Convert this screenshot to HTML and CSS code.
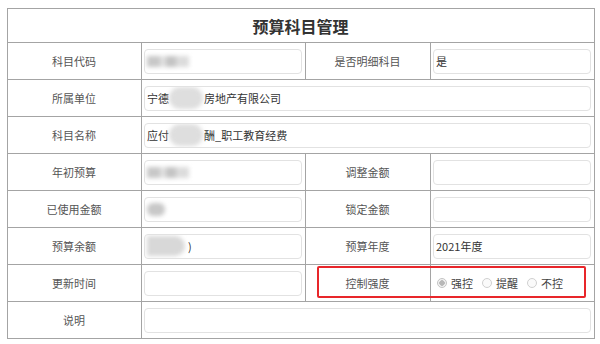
FILE: index.html
```html
<!DOCTYPE html>
<html lang="zh-CN">
<head>
    <meta charset="UTF-8">
    <title>预算科目管理</title>
    <link rel="stylesheet" href="styles.css">
</head>
<body>

<div class="wrap">
    <table class="form-table">
        <colgroup>
            <col class="c-label">
            <col class="c-value">
            <col class="c-label2">
            <col class="c-value">
        </colgroup>
        <tr>
            <th colspan="4" class="title">预算科目管理</th>
        </tr>
        <tr>
            <td class="label">科目代码</td>
            <td><div class="field"><span class="blur b-code"></span></div></td>
            <td class="label">是否明细科目</td>
            <td><div class="field">是</div></td>
        </tr>
        <tr>
            <td class="label">所属单位</td>
            <td colspan="3"><div class="field">宁德<span class="blur b-round"></span>房地产有限公司</div></td>
        </tr>
        <tr>
            <td class="label">科目名称</td>
            <td colspan="3"><div class="field">应付<span class="blur b-round"></span>酬_职工教育经费</div></td>
        </tr>
        <tr>
            <td class="label">年初预算</td>
            <td><div class="field"><span class="blur b-code"></span></div></td>
            <td class="label">调整金额</td>
            <td><div class="field"></div></td>
        </tr>
        <tr>
            <td class="label">已使用金额</td>
            <td><div class="field"><span class="blur b-small"></span></div></td>
            <td class="label">锁定金额</td>
            <td><div class="field"></div></td>
        </tr>
        <tr>
            <td class="label">预算余额</td>
            <td><div class="field"><span class="blur b-left"></span>)</div></td>
            <td class="label">预算年度</td>
            <td><div class="field">2021年度</div></td>
        </tr>
        <tr>
            <td class="label">更新时间</td>
            <td><div class="field"></div></td>
            <td class="label">控制强度</td>
            <td>
                <div class="radios">
                    <label class="radio"><span class="dot checked"></span>强控</label>
                    <label class="radio"><span class="dot"></span>提醒</label>
                    <label class="radio"><span class="dot"></span>不控</label>
                </div>
            </td>
        </tr>
        <tr>
            <td class="label">说明</td>
            <td colspan="3"><div class="field"></div></td>
        </tr>
    </table>

    <!-- annotation around 控制强度 -->
    <div class="mark"></div>
</div>

</body>
</html>
```

FILE: styles.css
```css
* {
    margin: 0;
    padding: 0;
    box-sizing: border-box;
}

body {
    background: #ffffff;
    font-family: "Noto Sans CJK SC", "Noto Sans", sans-serif;
    font-size: 11px;
    color: #333;
}

.wrap {
    position: relative;
    width: 587px;
    margin: 8px 0 0 7px;
}

.form-table {
    width: 587px;
    border-collapse: collapse;
    table-layout: fixed;
    border: 1px solid #9a9a9a;
}

.c-label { width: 134px; }
.c-value { width: 164px; }
.c-label2 { width: 125px; }

.form-table th,
.form-table td {
    border: 1px solid #a4a4a4;
    height: 37px;
    padding: 0 3px 0 2px;
}

.form-table .title {
    height: 34px;
    font-size: 16px;
    font-weight: bold;
    color: #333;
    text-align: center;
}

.label {
    text-align: center;
    color: #555;
}

/* Input box */
.field {
    height: 25px;
    border: 1px solid #e2e2e2;
    border-radius: 4px;
    padding: 0 2px;
    display: flex;
    align-items: center;
    color: #333;
    white-space: nowrap;
    overflow: hidden;
}

/* Blurred (masked) values */
.blur {
    display: inline-block;
    background: #cfcfcf;
    filter: blur(2px);
}

.b-code {
    width: 42px;
    height: 11px;
    background: linear-gradient(to right, #c8c8c8 0, #c8c8c8 30%, #e0e0e0 30%, #e0e0e0 45%, #c4c4c4 45%, #c4c4c4 70%, #dcdcdc 70%);
}

.b-round {
    width: 34px;
    height: 22px;
    border-radius: 11px;
    background: #dedede;
    margin: 0 1px 0 0;
}

.b-small {
    width: 18px;
    height: 13px;
    border-radius: 6px;
    background: #c8c8c8;
}

.b-left {
    width: 38px;
    height: 20px;
    border-radius: 0 10px 10px 0;
    background: #d8d8d8;
    margin-right: 3px;
}

/* Radios */
.radios {
    display: flex;
    align-items: center;
    gap: 9px;
    padding-left: 4px;
}

.radio {
    display: flex;
    align-items: center;
    gap: 4px;
    color: #444;
}

.dot {
    width: 10px;
    height: 10px;
    border: 1px solid #d0d0d0;
    border-radius: 50%;
    background: #fafafa;
}

.dot.checked {
    border-color: #c4c4c4;
    background: radial-gradient(circle, #b8b8b8 0, #b8b8b8 2.5px, #f2f2f2 3px);
}

.mark {
    position: absolute;
    left: 310px;
    top: 258px;
    width: 269px;
    height: 32px;
    border: 2px solid #e8262a;
    border-radius: 2px;
}
```
